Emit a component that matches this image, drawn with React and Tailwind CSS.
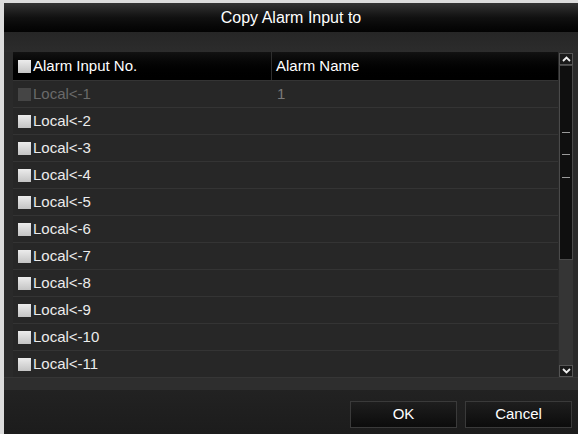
import React from "react";

const rows = Array.from({ length: 11 }, (_, i) => ({
  no: `Local<-${i + 1}`,
  name: i === 0 ? "1" : "",
  disabled: i === 0,
}));

const Box = ({ disabled }) => (
  <span
    className={
      disabled
        ? "w-[13px] h-[13px] shrink-0 bg-[#454545]"
        : "w-[13px] h-[13px] shrink-0 bg-gradient-to-b from-[#ececec] to-[#c4c4c4]"
    }
  />
);

const ScrollBar = () => (
  <div className="w-[14px] mt-[1px] flex flex-col bg-[#353535]">
    <div className="h-[12px] flex items-center justify-center bg-[#1a1a1a] border border-[#555]">
      <svg width="9" height="6" viewBox="0 0 9 6">
        <path d="M1 5 L4.5 1.5 L8 5" stroke="#f0f0f0" strokeWidth="1.8" fill="none" />
      </svg>
    </div>
    <div className="h-[195px] relative bg-[#0f0f0f] border border-[#4a4a4a]">
      <div className="absolute left-[2px] right-[2px] top-[66px] h-[1px] bg-[#9a9a9a]" />
      <div className="absolute left-[2px] right-[2px] top-[88px] h-[1px] bg-[#9a9a9a]" />
      <div className="absolute left-[2px] right-[2px] top-[111px] h-[1px] bg-[#9a9a9a]" />
    </div>
    <div className="flex-1" />
    <div className="h-[12px] flex items-center justify-center bg-[#1a1a1a] border border-[#555]">
      <svg width="9" height="6" viewBox="0 0 9 6">
        <path d="M1 1 L4.5 4.5 L8 1" stroke="#f0f0f0" strokeWidth="1.8" fill="none" />
      </svg>
    </div>
  </div>
);

export default function App() {
  return (
    <div
      className="w-[578px] h-[434px] bg-[#dcdcdc] pt-[3px] pl-[4px] overflow-hidden"
      style={{ fontFamily: '"Liberation Sans", Arial, sans-serif' }}
    >
      <div className="h-full flex flex-col bg-[#2a2a2a]">
        <div className="h-[29px] shrink-0 flex items-center justify-center bg-gradient-to-b from-[#343434] via-[#111] to-[#030303] text-[16px] text-white">
          Copy Alarm Input to
        </div>
        <div className="h-[20px] shrink-0 bg-gradient-to-b from-[#262626] to-[#2c2c2c]" />
        <div className="flex pl-[9px] gap-[1px]">
          <div className="w-[545px] flex flex-col">
            <div className="h-[28px] flex items-center bg-gradient-to-b from-[#121212] via-[#030303] to-[#000] text-[15px] text-white">
              <div className="w-[259px] h-full flex items-center gap-[2px] pl-[5px] border-r border-[#2e2e2e]">
                <Box />
                <span>Alarm Input No.</span>
              </div>
              <div className="pl-[4px]">Alarm Name</div>
            </div>
            {rows.map((r) => (
              <div
                key={r.no}
                className="h-[27px] flex items-center bg-[#272727] border-t border-[#343434] text-[15px]"
              >
                <div
                  className={
                    r.disabled
                      ? "w-[260px] flex items-center gap-[2px] pl-[5px] text-[#6a6a6a]"
                      : "w-[260px] flex items-center gap-[2px] pl-[5px] text-[#ececec]"
                  }
                >
                  <Box disabled={r.disabled} />
                  <span>{r.no}</span>
                </div>
                <div className="pl-[4px] text-[#7a7a7a]">{r.name}</div>
              </div>
            ))}
          </div>
          <ScrollBar />
        </div>
        <div className="h-[13px] shrink-0 bg-[#2e2e2e] border-t border-[#363636]" />
        <div className="flex-1 flex justify-end items-start gap-[8px] pr-[6px] pt-[11px] bg-gradient-to-b from-[#222] to-[#1c1c1c]">
          <button className="w-[107px] h-[27px] bg-gradient-to-b from-[#1e1e1e] to-[#0c0c0c] border border-[#3a3a3a] text-white text-[15px]">
            OK
          </button>
          <button className="w-[107px] h-[27px] bg-gradient-to-b from-[#1e1e1e] to-[#0c0c0c] border border-[#3a3a3a] text-white text-[15px]">
            Cancel
          </button>
        </div>
      </div>
    </div>
  );
}
